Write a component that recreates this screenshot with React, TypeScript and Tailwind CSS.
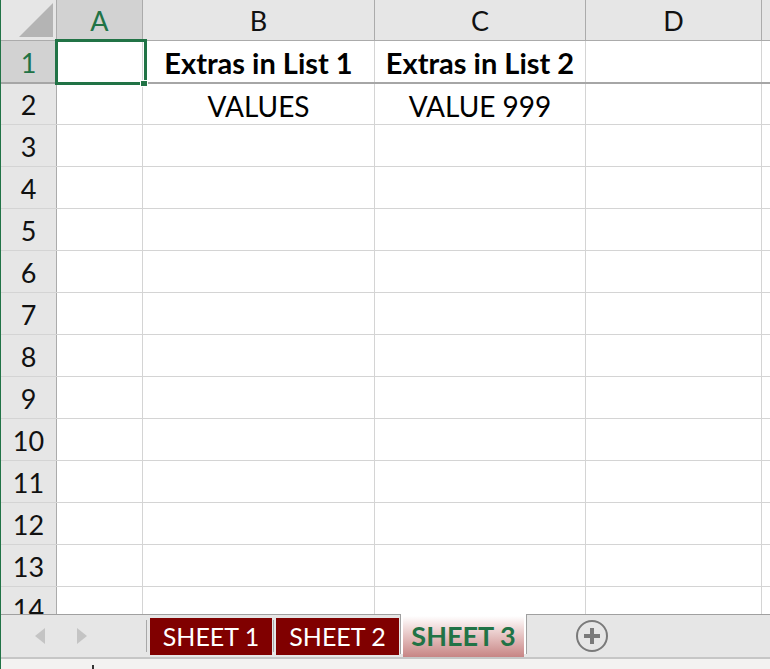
import React from "react";

const cols = [
  { key: "A", w: "w-[86px]" },
  { key: "B", w: "w-[232px]" },
  { key: "C", w: "w-[211px]" },
  { key: "D", w: "w-[176px]" },
];

const rowNums = [1, 2, 3, 4, 5, 6, 7, 8, 9, 10, 11, 12, 13, 14];

function rowHeight(n: number) {
  if (n === 1) return "h-[43px] border-b-2 border-b-[#a6a6a6]";
  if (n === 2) return "h-[41px] border-b border-b-[#d4d4d4]";
  return "h-[42px] border-b border-b-[#d4d4d4]";
}

function cellContent(r: number, c: string) {
  if (r === 1 && c === "B") return <span className="font-bold text-[29px]">Extras in List 1</span>;
  if (r === 1 && c === "C") return <span className="font-bold text-[29px]">Extras in List 2</span>;
  if (r === 2 && c === "B") return "VALUES";
  if (r === 2 && c === "C") return "VALUE 999";
  return null;
}

export default function App() {
  return (
    <div
      className="relative w-[770px] h-[669px] overflow-hidden bg-white border-l border-l-[#217346] flex flex-col text-[#000]"
      style={{ fontFamily: "Lato, 'Open Sans', sans-serif" }}
    >
      {/* grid area */}
      <div className="relative h-[614px] overflow-hidden flex flex-col shrink-0">
        {/* header row */}
        <div className="flex h-[41px] shrink-0 border-b border-b-[#ababab] bg-[#e6e6e6]">
          <div className="w-[56px] shrink-0 border-r border-r-[#ababab] flex items-end justify-end pr-[3px] pb-[3px]">
            <svg width="34" height="34" viewBox="0 0 34 34">
              <polygon points="34,0 34,34 0,34" fill="#b4b4b4" />
            </svg>
          </div>
          {cols.map((c) => (
            <div
              key={c.key}
              className={`${c.w} shrink-0 border-r border-r-[#ababab] flex items-center justify-center text-[27px] pt-[2px] ${
                c.key === "A" ? "bg-[#d2d2d2] text-[#217346]" : "text-[#111]"
              }`}
            >
              {c.key}
            </div>
          ))}
          <div className="flex-1" />
        </div>
        {rowNums.map((r) => (
          <div key={r} className={`flex shrink-0 ${rowHeight(r)}`}>
            <div
              className={`w-[56px] shrink-0 border-r border-r-[#ababab] flex items-center justify-center text-[27px] pt-[3px] ${
                r === 1 ? "bg-[#d2d2d2] text-[#217346]" : "bg-[#e6e6e6] text-[#111]"
              }`}
            >
              {r}
            </div>
            {cols.map((c) => (
              <div
                key={c.key}
                className={`${c.w} shrink-0 border-r border-r-[#d4d4d4] flex items-center justify-center text-[28px] pt-[3px] whitespace-nowrap`}
              >
                {cellContent(r, c.key)}
              </div>
            ))}
            <div className="flex-1" />
          </div>
        ))}
        {/* selection overlay */}
        <div className="absolute left-[54px] top-[39px] w-[92px] h-[46px] border-[3px] border-[#217346]" />
        <div className="absolute left-[139px] top-[80px] w-[8px] h-[7px] bg-[#217346] border border-white" />
      </div>

      {/* tab bar */}
      <div className="h-[43px] shrink-0 bg-[#e6e6e6] border-t border-t-[#a0a0a0] flex items-center relative">
        <div className="w-[145px] shrink-0 flex items-center h-full">
          <svg className="ml-[34px]" width="10" height="16" viewBox="0 0 10 16">
            <polygon points="10,0 10,16 0,8" fill="#c4c4c4" />
          </svg>
          <svg className="ml-[32px]" width="10" height="16" viewBox="0 0 10 16">
            <polygon points="0,0 0,16 10,8" fill="#c4c4c4" />
          </svg>
        </div>
        <div className="w-px h-[32px] bg-[#a8a8a8] shrink-0" />
        <div className="ml-[3px] w-[122px] h-[37px] mt-[3px] self-start bg-[#800000] text-white text-[25px] flex items-center justify-center shrink-0">
          SHEET 1
        </div>
        <div className="mx-[1px] w-px h-[32px] bg-[#a8a8a8] shrink-0" />
        <div className="ml-[1px] w-[123px] h-[37px] mt-[3px] self-start bg-[#800000] text-white text-[25px] flex items-center justify-center shrink-0">
          SHEET 2
        </div>
        <div className="ml-[1px] -mt-px self-start w-[127px] h-[40px] border-x border-x-[#a0a0a0] bg-white shrink-0 flex flex-col">
          <div className="flex-1 mt-[2px] mx-[2px] bg-gradient-to-b from-white to-[#c78585] text-[#217346] font-bold text-[27px] flex items-center justify-center">
            SHEET 3
          </div>
          <div className="h-[3px] bg-[#217346] -mx-px" />
        </div>
        <div className="ml-[49px] shrink-0 w-[32px] h-[32px] rounded-full border-2 border-[#7a7a7a] flex items-center justify-center">
          <svg width="18" height="18" viewBox="0 0 18 18">
            <rect x="7" y="1" width="4" height="16" fill="#7a7a7a" />
            <rect x="1" y="7" width="16" height="4" fill="#7a7a7a" />
          </svg>
        </div>
      </div>

      {/* status bar */}
      <div className="flex-1 bg-[#f3f2f1] border-t-2 border-t-[#c6c6c6] relative">
        <div className="absolute left-[91px] top-[6px] w-[2px] h-[4px] bg-[#333]" />
      </div>
    </div>
  );
}
